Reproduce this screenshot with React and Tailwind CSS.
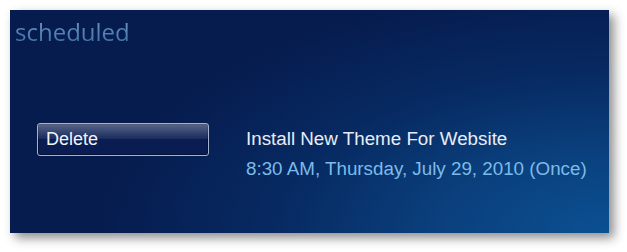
export default function App() {
  return (
    <div className="w-[627px] h-[252px] bg-white pt-[10px] pl-[10px]">
      <div className="relative w-[599px] h-[223px] overflow-hidden shadow-[5px_5px_10px_rgba(0,0,0,0.45)] bg-[#061c4f]">
        <div className="absolute inset-0 bg-[radial-gradient(ellipse_85%_110%_at_100%_100%,#0b5092_0%,#0a3f7c_35%,#072a62_65%,rgba(6,28,79,0)_100%)]" />
        <div className="relative flex flex-col h-full">
          <div
            className="pl-[5px] pt-[7px] text-[24px] leading-[29px] bg-gradient-to-b from-[#7aa6d2] to-[#3f6ca2] bg-clip-text text-transparent w-fit"
            style={{ fontFamily: '"Open Sans", "Noto Sans", sans-serif' }}
          >
            scheduled
          </div>
          <div className="flex items-start pl-[27px] pt-[77px]" style={{ fontFamily: '"Liberation Sans", Arial, sans-serif' }}>
            <div className="relative w-[172px] h-[33px] rounded-[3px] border border-[#a4b2cc] bg-[#0a1d52] overflow-hidden shadow-[inset_0_0_0_1px_rgba(0,0,0,0.35)]">
              <div className="absolute left-0 right-0 top-0 h-[15px] bg-gradient-to-b from-[rgba(255,255,255,0.32)] to-[rgba(255,255,255,0.06)]" />
              <div className="relative pl-[8px] leading-[31px] text-[18px] text-[#f2f4f8]">Delete</div>
            </div>
            <div className="ml-[37px] flex flex-col gap-[8px] mt-[5px]">
              <div className="text-[18.8px] leading-[22px] text-[#e8edf5]">Install New Theme For Website</div>
              <div className="text-[18.8px] leading-[22px] text-[#7cbbe9]">8:30 AM, Thursday, July 29, 2010 (Once)</div>
            </div>
          </div>
        </div>
      </div>
    </div>
  );
}
